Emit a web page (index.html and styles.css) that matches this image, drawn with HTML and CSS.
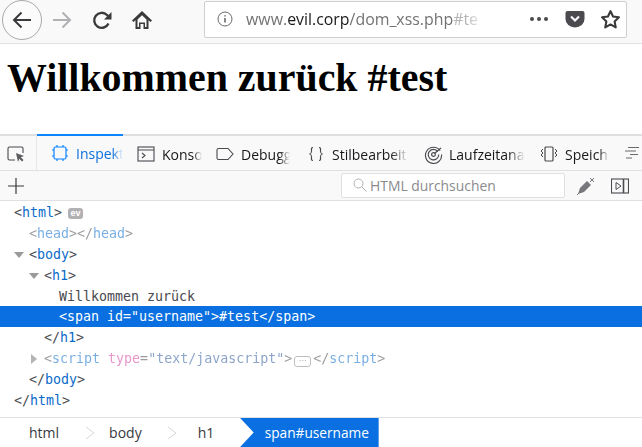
FILE: index.html
```html
<!DOCTYPE html>
<html lang="de">
<head>
<meta charset="utf-8">
<title>Inspektor</title>
<link rel="stylesheet" href="styles.css">
</head>
<body>
<div class="nav">
  <div class="back"><svg class="i20" viewBox="0 0 20 20"><path d="M19 10H2M9.500 2.500L2 10l7.500 7.500" fill="none" stroke="#3a3a3c" stroke-width="2"/></svg></div>
  <svg class="i20 fwd" viewBox="0 0 20 20"><path d="M1 10h17M10.500 2.500L18 10l-7.500 7.500" fill="none" stroke="#b1b1b3" stroke-width="2"/></svg>
  <svg class="i20 reload" viewBox="0 0 20 20"><path d="M16.500 13.500A7.500 7.500 0 1 1 15 5L17 7" fill="none" stroke="#3a3a3c" stroke-width="2.400"/><path d="M19.500 2v7.500H12z" fill="#3a3a3c"/></svg>
  <svg class="i20 home" viewBox="0 0 20 20"><path d="M10 1L0 10.500l1.500 1.500L3.500 10.200V19h5v-5h3v5h5v-8.800l2 1.800 1.500-1.500z" fill="#3a3a3c"/><path d="M5.500 9.500L10 5.200l4.500 4.300V17H13v-4.500H7V17H5.500z" fill="#f9f9fa"/></svg>
  <div class="urlbar">
    <svg class="info" viewBox="0 0 16 16"><circle cx="8" cy="8" r="7" fill="none" stroke="#6a6a6d" stroke-width="1"/><path d="M8 7v4.500M8 4.200v1.400" stroke="#6a6a6d" stroke-width="1.600"/></svg>
    <div class="url"><span class="dim">www.</span><span class="dom">evil.corp</span><span class="dim">/dom_xss.php</span><span class="dimmer">#te</span></div>
    <div class="dots"><i></i><i></i><i></i></div>
    <svg class="pocket" viewBox="0 0 20 18"><path d="M2.500 1h15A2 2 0 0 1 19.500 3v6a9.500 8.500 0 0 1-19 0V3a2 2 0 0 1 2-2z" fill="#4a4a4f"/><path d="M6 6.500l4 4 4-4" fill="none" stroke="#f9f9fa" stroke-width="2.200"/></svg>
    <svg class="star" viewBox="0 0 20 20"><path d="M10 2l2.400 5.200 5.600.7-4.100 3.900 1.100 5.700-5-2.800-5 2.800 1.100-5.700L2 7.900l5.600-.7z" fill="none" stroke="#3a3a3c" stroke-width="2" stroke-linejoin="round"/></svg>
  </div>
</div>
<div class="page"><h1>Willkommen zurück #test</h1></div>
<div class="tabs">
  <div class="picker"><svg class="i18" viewBox="0 0 18 18"><path d="M8 15H2.500A1.500 1.500 0 0 1 1 13.500V3.500A1.500 1.500 0 0 1 2.500 2h12A1.500 1.500 0 0 1 16 3.500V8" fill="none" stroke="#4a4a4f" stroke-width="1.100"/><path d="M9 8l8 3-3.200 1.200L16.500 15l-1.500 1.500-2.700-2.700L11 17z" fill="#5c5c61"/></svg></div>
  <div class="tab sel w86"><svg class="i18" viewBox="0 0 18 18"><rect x="3" y="3" width="12" height="12" rx="1.500" fill="none" stroke="#0a84ff" stroke-width="1.200"/><path d="M6 1v2M12 1v2M6 15v2M12 15v2M1 6h2M1 12h2M15 6h2M15 12h2" stroke="#0a84ff" stroke-width="1.200"/></svg><span class="lbl">Inspekt</span></div>
  <div class="tab w93"><svg class="i18" viewBox="0 0 18 18"><rect x="1" y="2" width="16" height="14" fill="none" stroke="#4a4a4f" stroke-width="1.100"/><path d="M1 5h16M5 8l3 2.500L5 13" fill="none" stroke="#4a4a4f" stroke-width="1.100"/></svg><span class="lbl l40">Konso</span></div>
  <div class="tab w91"><svg class="i18" viewBox="0 0 18 18"><path d="M2.500 3.500h9.500l5 5.500-5 5.500H2.500A1.500 1.500 0 0 1 1 13V5A1.500 1.500 0 0 1 2.500 3.500z" fill="none" stroke="#4a4a4f" stroke-width="1.100"/></svg><span class="lbl l49">Debugg</span></div>
  <div class="tab w117"><svg class="i18" viewBox="0 0 18 18"><path d="M6 2.500C4 2.500 4.500 4 4.500 6S4.500 8.500 2.500 9c2 .5 2 1 2 3s-.5 3.500 1.500 3.500M12 2.500c2 0 1.500 1.500 1.500 3.500s0 2.500 2 3c-2 .5-2 1-2 3s.5 3.500-1.500 3.500" fill="none" stroke="#4a4a4f" stroke-width="1.200"/></svg><span class="lbl l76">Stilbearbeit</span></div>
  <div class="tab w116 laufz"><svg class="i19" viewBox="0 0 20 20"><path d="M17 6A8.500 8.500 0 1 0 18.500 10M14.500 7A5.500 5.500 0 1 0 15.500 10" fill="none" stroke="#4a4a4f" stroke-width="1.200"/><circle cx="10" cy="10" r="2" fill="none" stroke="#4a4a4f" stroke-width="1.200"/><path d="M11 9l7-6" stroke="#4a4a4f" stroke-width="1.200"/></svg><span class="lbl l76">Laufzeitana</span></div>
  <div class="tab w85"><svg class="i18" viewBox="0 0 18 18"><rect x="5" y="2" width="8" height="14" rx="1" fill="none" stroke="#4a4a4f" stroke-width="1.200"/><path d="M3 4L1 6l2 2-2 2 2 2M15 4l2 2-2 2 2 2-2 2" fill="none" stroke="#4a4a4f" stroke-width="1"/></svg><span class="lbl l44">Speich</span></div>
  <svg class="i14 more" viewBox="0 0 14 14"><path d="M3 1.500h11M0 5h11M5 8.500h8M1 12h6" stroke="#6a6a6d" stroke-width="1"/></svg>
</div>
<div class="bar">
  <svg class="plus" viewBox="0 0 16 16"><path d="M8 0v16M0 8h16" stroke="#3a3a3c" stroke-width="1.200"/></svg>
  <div class="search"><svg class="mag" viewBox="0 0 14 14"><circle cx="5.500" cy="5.500" r="4.500" fill="none" stroke="#b1b1b3"/><path d="M9 9l4.500 4.500" stroke="#b1b1b3"/></svg><span>HTML durchsuchen</span></div>
  <svg class="drop" viewBox="0 0 20 20"><path d="M2 18l2-6 7-7 4 4-7 7z" fill="#77777c"/><path d="M14 2l4 4M18 2l-4 4" stroke="#77777c" stroke-width="1"/><path d="M1 19l2-2" stroke="#77777c"/></svg>
  <svg class="side" viewBox="0 0 18 16"><rect x=".5" y="1" width="17" height="14" fill="none" stroke="#4a4a4f" stroke-width="1.100"/><path d="M12.500 1v14" stroke="#4a4a4f" stroke-width="1.600"/><path d="M5 4.500l5 3.500-5 3.500z" fill="none" stroke="#4a4a4f"/></svg>
</div>
<div class="tree">
  <div class="row d0"><span class="p">&lt;</span><span class="t">html</span><span class="p">&gt;</span><span class="ev">ev</span></div>
  <div class="row d1 faint"><span class="p">&lt;</span><span class="t">head</span><span class="p">&gt;&lt;/</span><span class="t">head</span><span class="p">&gt;</span></div>
  <div class="row d1"><i class="tw open o0"></i><span class="p">&lt;</span><span class="t">body</span><span class="p">&gt;</span></div>
  <div class="row d2"><i class="tw open o1"></i><span class="p">&lt;</span><span class="t">h1</span><span class="p">&gt;</span></div>
  <div class="row d3 p">Willkommen zurück</div>
  <div class="row d3 selrow">&lt;span id="username"&gt;#test&lt;/span&gt;</div>
  <div class="row d2"><span class="p">&lt;/</span><span class="t">h1</span><span class="p">&gt;</span></div>
  <div class="row d2 faint"><i class="tw shut"></i><span class="p">&lt;</span><span class="t">script</span> <span class="a">type</span><span class="p">=</span><span class="v">"text/javascript"</span><span class="p">&gt;</span><span class="ell">···</span><span class="p">&lt;/</span><span class="t">script</span><span class="p">&gt;</span></div>
  <div class="row d1"><span class="p">&lt;/</span><span class="t">body</span><span class="p">&gt;</span></div>
  <div class="row d0"><span class="p">&lt;/</span><span class="t">html</span><span class="p">&gt;</span></div>
</div>
<div class="crumbs">
  <span class="c c1">html</span><svg class="sep" viewBox="0 0 10 14"><path d="M1 1l8 6-8 6" fill="none" stroke="#d7d7db"/></svg>
  <span class="c c2">body</span><svg class="sep" viewBox="0 0 10 14"><path d="M1 1l8 6-8 6" fill="none" stroke="#d7d7db"/></svg>
  <span class="c c3">h1</span>
  <span class="cur">span#username</span>
</div>
</body>
</html>
```
FILE: styles.css
```css
* { box-sizing: border-box; }
html, body { margin: 0; padding: 0; }
body { width: 642px; height: 447px; overflow: hidden; background: #fff; font-family: "Open Sans", "Noto Sans", sans-serif; }
svg { display: block; flex: none; }
.i20 { width: 20px; height: 20px; }
.i18 { width: 18px; height: 18px; }
.i19 { width: 19px; height: 19px; }
.i14 { width: 14px; height: 14px; }

.nav { height: 44px; background: #f9f9fa; border-bottom: 1px solid #e1e1e3; display: flex; align-items: center; padding-left: 2px; }
.back { width: 40px; height: 40px; border: 1px solid #a9a9ac; border-radius: 50%; background: #fbfbfc; display: flex; align-items: center; justify-content: center; margin-top: -3px; }
.fwd { margin-left: 10px; margin-top: -3px; }
.reload { margin-left: 20px; margin-top: -3px; }
.home { margin-left: 20px; margin-top: -3px; }
.urlbar { margin-left: 52px; width: 423px; height: 37px; margin-top: -5px; background: #fff; border: 1px solid #cfcfd2; border-radius: 2px; display: flex; align-items: center; padding-left: 12px; }
.info { width: 16px; height: 16px; }
.url { margin-left: 13px; width: 250px; overflow: hidden; white-space: nowrap; font-size: 15.900px; -webkit-mask-image: linear-gradient(to right, #000 88%, transparent 96%); mask-image: linear-gradient(to right, #000 88%, transparent 96%); }
.dim { color: #737373; }
.dom { color: #1a1a1a; }
.dimmer { color: #b3b3b3; }
.dots { margin-left: 34px; display: flex; gap: 3px; width: 20px; }
.dots i { width: 4px; height: 4px; border-radius: 50%; background: #4a4a4f; }
.pocket { width: 20px; height: 18px; margin-left: 15px; }
.star { width: 21px; height: 21px; margin-left: 15px; }

.page { height: 90px; background: #fff; padding: 11px 0 0 7px; }
h1 { margin: 0; font: bold 39.900px/46px "Liberation Serif", serif; color: #000; white-space: nowrap; }

.tabs { height: 37px; background: #f9f9fa; border-top: 2px solid #e0e0e2; border-bottom: 1px solid #e0e0e2; display: flex; align-items: center; }
.picker { width: 37px; height: 34px; display: flex; align-items: center; padding-left: 7px; padding-top: 2px; border-right: 1px solid #e6e6e8; }
.tab { height: 34px; display: flex; align-items: center; padding-left: 14px; gap: 7px; color: #18181a; font-size: 14px; padding-top: 2px; white-space: nowrap; }
.sel { border-top: 2px solid #0a84ff; margin-top: -2px; height: 36px; color: #0a6fdc; padding-top: 0; }
.laufz { gap: 6px; }
.w86 { width: 86px; }
.w93 { width: 79px; }
.w91 { width: 91px; }
.w117 { width: 117px; }
.w116 { width: 116px; }
.w85 { width: 99px; }
.lbl { display: block; width: 47px; overflow: hidden; -webkit-mask-image: linear-gradient(to right, #000 78%, transparent); mask-image: linear-gradient(to right, #000 78%, transparent); }
.l40 { width: 40px; }
.l49 { width: 49px; }
.l76 { width: 76px; }
.l44 { width: 44px; }

.bar { height: 30px; background: #f9f9fa; border-bottom: 1px solid #e0e0e2; display: flex; align-items: center; padding-left: 8px; }
.plus { width: 16px; height: 16px; }
.search { margin-left: 317px; width: 224px; height: 25px; background: #fff; border: 1px solid #e0e0e2; border-radius: 2px; display: flex; align-items: center; padding-left: 11px; gap: 3px; font-size: 13.900px; color: #8a8a8d; margin-top: -1px; }
.mag { width: 14px; height: 14px; }
.drop { width: 20px; height: 20px; margin-left: 11px; }
.side { width: 18px; height: 16px; margin-left: 15px; }

.tree { height: 216px; padding-top: 1px; font: 13.300px/22px "DejaVu Sans Mono", monospace; background: #fff; }
.row { height: 20.900px; white-space: pre; position: relative; }
.d0 { padding-left: 14px; }
.d1 { padding-left: 29px; }
.d2 { padding-left: 44px; }
.d3 { padding-left: 59px; }
.p { color: #4a4a4f; }
.t { color: #0b6bcb; }
.a { color: #d6409f; }
.v { color: #2d5a9a; }
.faint { opacity: .55; }
.selrow { background: #0a6fe0; color: #fff; }
.ev { display: inline-block; margin-left: 6px; width: 15px; height: 11px; border-radius: 3px; background: #b1b1b3; color: #fff; font: bold 9px/10px "Liberation Sans", sans-serif; text-align: center; vertical-align: 1px; }
.tw { position: absolute; top: 8px; width: 0; height: 0; }
.open { border-left: 5.500px solid transparent; border-right: 5.500px solid transparent; border-top: 6px solid #9a9a9d; }
.o0 { left: 14px; }
.o1 { left: 29px; }
.shut { left: 31px; top: 6px; border-top: 5.500px solid transparent; border-bottom: 5.500px solid transparent; border-left: 6px solid #77777a; }
.ell { display: inline-block; width: 17px; height: 11px; margin: 0 2px; border: 1px solid #8a8a8d; border-radius: 3px; font: 8px/8px "Liberation Sans", sans-serif; text-align: center; color: #4a4a4f; vertical-align: 0; }

.crumbs { height: 30px; border-top: 1px solid #e0e0e2; background: #fff; display: flex; align-items: center; font-size: 14px; color: #38383d; overflow: hidden; }
.c1 { margin-left: 29px; }
.sep { width: 10px; height: 14px; }
.crumbs .sep:nth-of-type(1) { margin-left: 26px; margin-right: 14px; }
.crumbs .sep:nth-of-type(2) { margin-left: 25px; margin-right: 19px; }
.c3 { width: 42px; margin-left: 2px; }
.cur { height: 30px; width: 139px; background: #0a6fe0; color: #fff; display: flex; align-items: center; padding-left: 25px; font-size: 13.700px; clip-path: polygon(0 0, 100% 0, 100% 100%, 0 100%, 14px 50%); }
```
